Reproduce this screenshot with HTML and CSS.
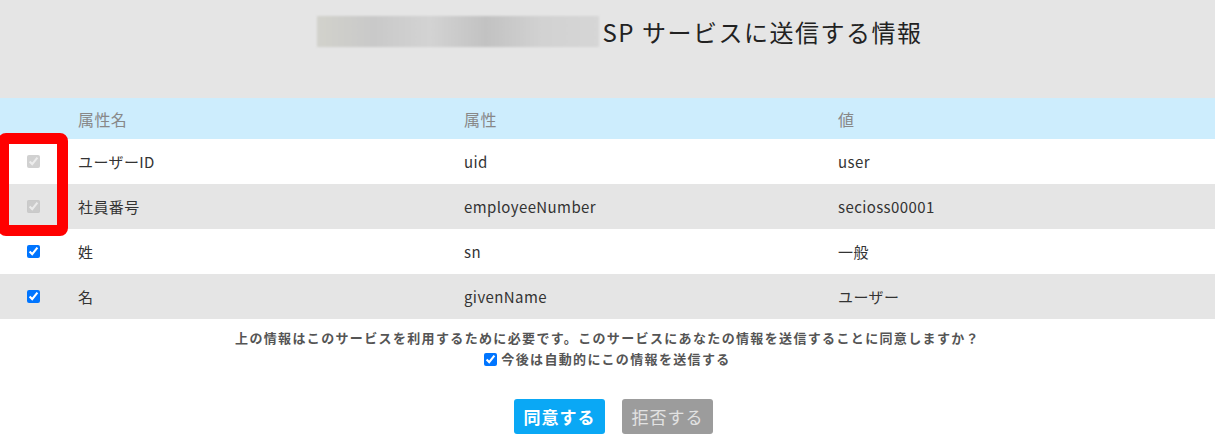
FILE: index.html
```html
<!DOCTYPE html>
<html lang="ja">
<head>
    <meta charset="UTF-8">
    <title>SP サービスに送信する情報</title>
    <link rel="stylesheet" href="styles.css">
</head>
<body>
    <div class="page-header">
        <h1><span class="blurred-name"></span>SP サービスに送信する情報</h1>
    </div>
    <div class="attr-table">
        <div class="attr-row head">
            <div class="cell chk"></div>
            <div class="cell">属性名</div>
            <div class="cell">属性</div>
            <div class="cell">値</div>
        </div>
        <div class="attr-row">
            <div class="cell chk"><input type="checkbox" checked disabled></div>
            <div class="cell">ユーザーID</div>
            <div class="cell">uid</div>
            <div class="cell">user</div>
        </div>
        <div class="attr-row alt">
            <div class="cell chk"><input type="checkbox" checked disabled></div>
            <div class="cell">社員番号</div>
            <div class="cell">employeeNumber</div>
            <div class="cell">secioss00001</div>
        </div>
        <div class="attr-row">
            <div class="cell chk"><input type="checkbox" checked></div>
            <div class="cell">姓</div>
            <div class="cell">sn</div>
            <div class="cell">一般</div>
        </div>
        <div class="attr-row alt">
            <div class="cell chk"><input type="checkbox" checked></div>
            <div class="cell">名</div>
            <div class="cell">givenName</div>
            <div class="cell">ユーザー</div>
        </div>
        <div class="highlight-box"></div>
    </div>
    <div class="consent">
        <p>上の情報はこのサービスを利用するために必要です。このサービスにあなたの情報を送信することに同意しますか？</p>
        <label><input type="checkbox" checked> 今後は自動的にこの情報を送信する</label>
    </div>
    <div class="actions">
        <button class="btn agree">同意する</button>
        <button class="btn reject">拒否する</button>
    </div>
</body>
</html>
```

FILE: styles.css
```css
body { margin: 0; font-family: "Noto Sans CJK JP", "Open Sans", sans-serif; color: #333; background: #fff; }
.page-header { background: #e5e5e5; height: 98px; display: flex; justify-content: center; }
.page-header h1 { margin: 16px 0 0 24px; font-size: 24px; font-weight: 400; color: #222; display: flex; align-items: center; height: 31px; letter-spacing: 1.5px; }
.blurred-name { display: inline-block; width: 282px; height: 31px; margin-right: 4px; background: linear-gradient(90deg, #d2d2cc 0%, #c9c9c9 20%, #d3d3d3 40%, #c2c2c2 60%, #d2d2d2 80%, #d6d6d6 100%); filter: blur(1px); }
.attr-table { position: relative; }
.attr-row { display: grid; grid-template-columns: 66px 386px 374px 1fr; height: 45px; align-items: center; font-size: 15px; letter-spacing: 0.4px; }
.attr-row.head { height: 41px; background: #cdedfd; color: #888; font-size: 16px; }
.attr-row.alt { background: #e5e5e5; }
.cell { padding-left: 12px; }
.cell.chk { padding-left: 0; display: flex; justify-content: center; }
.cell.chk input { margin: 0; width: 13px; height: 13px; }
.highlight-box { position: absolute; left: -2px; top: 35px; width: 70px; height: 103px; box-sizing: border-box; border: 11px solid #ff0000; border-radius: 8px; }
.consent { text-align: center; font-size: 13px; font-weight: 700; color: #555; margin-top: 9px; letter-spacing: 1.35px; }
.consent p { margin: 0; line-height: 20px; }
.consent label { display: inline-flex; align-items: center; line-height: 22px; }
.consent label input { margin: 0 4px 0 0; width: 13px; height: 13px; }
.actions { display: flex; justify-content: center; gap: 17px; margin-top: 29px; padding-left: 12px; }
.btn { width: 91px; height: 35px; border: none; border-radius: 3px; font-family: inherit; font-size: 17px; font-weight: 700; padding: 0; letter-spacing: 1px; }
.btn.agree { background: #0aa8f5; color: #fff; }
.btn.reject { background: #9c9c9c; color: #e2e2e2; font-weight: 400; }
```
